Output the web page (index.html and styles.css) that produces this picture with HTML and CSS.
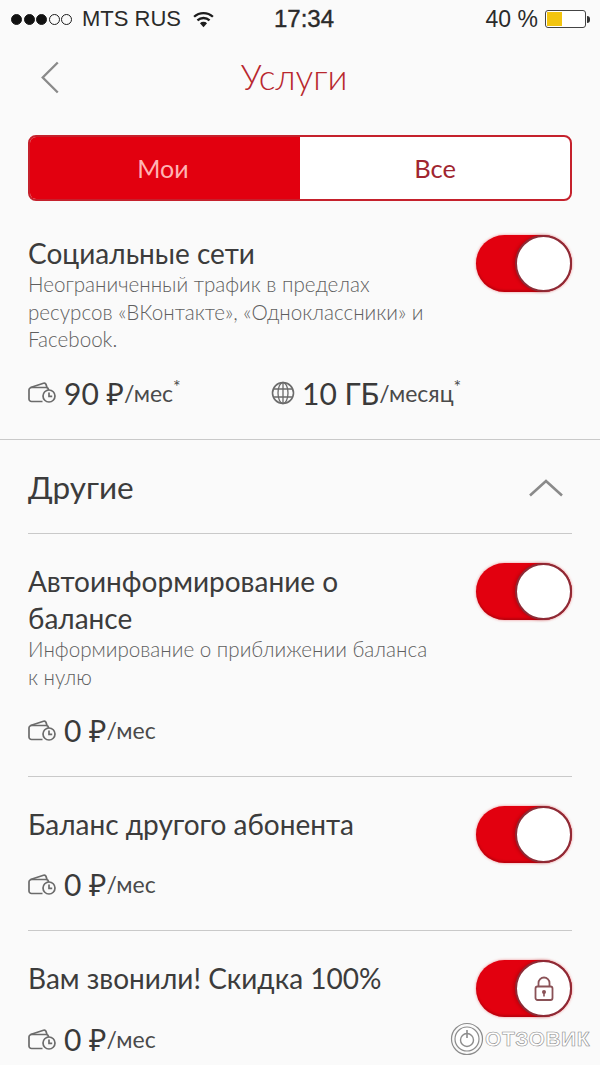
FILE: index.html
```html
<!DOCTYPE html>
<html lang="ru">
<head>
<meta charset="utf-8">
<title>Услуги</title>
<link rel="stylesheet" href="styles.css">
</head>
<body>
<div class="screen">
  <div class="status">
    <div class="status-left">
      <span class="signal"><i class="dot on"></i><i class="dot on"></i><i class="dot on"></i><i class="dot"></i><i class="dot"></i></span>
      <span class="carrier">MTS RUS</span>
      <svg class="wifi" width="23" height="17" viewBox="0 0 22 16"><path d="M11 15.5 L7.6 11.6 A5 5 0 0 1 14.4 11.6 Z" fill="#1c1c1c"/><path d="M5.2 8.8 A8.6 8.6 0 0 1 16.8 8.8" fill="none" stroke="#1c1c1c" stroke-width="2.2"/><path d="M2 5.4 A13.2 13.2 0 0 1 20 5.4" fill="none" stroke="#1c1c1c" stroke-width="2.2"/></svg>
    </div>
    <div class="clock">17:34</div>
    <div class="status-right">
      <span class="charge">40 %</span>
      <span class="battery"><span class="battery-fill"></span></span>
      <span class="battery-tip"></span>
    </div>
  </div>

  <div class="nav">
    <svg class="back" width="20" height="33" viewBox="0 0 20 34"><path d="M18 1.5 L2.5 17 L18 32.5" fill="none" stroke="#8a8a8a" stroke-width="2.4"/></svg>
    <h1 class="title">Услуги</h1>
  </div>

  <div class="tabs">
    <div class="tab tab-active">Мои</div>
    <div class="tab">Все</div>
  </div>

  <section class="service service-first">
    <div class="service-top">
      <div class="service-text">
        <div class="service-name">Социальные сети</div>
        <p class="service-desc">Неограниченный трафик в пределах ресурсов «ВКонтакте», «Одноклассники» и Facebook.</p>
      </div>
      <div class="toggle"><span class="knob"></span></div>
    </div>
    <div class="prices">
      <div class="price">
        <svg class="icon" width="29" height="21" viewBox="0 0 29 21"><use href="#wallet"/></svg>
        <span class="amount">90 ₽</span><span class="unit">/мес<sup>*</sup></span>
      </div>
      <div class="price">
        <svg class="icon" width="24" height="24" viewBox="0 0 24 24"><circle cx="12" cy="12" r="10.5" fill="none" stroke="#6b6b6b" stroke-width="1.6"/><ellipse cx="12" cy="12" rx="5" ry="10.5" fill="none" stroke="#6b6b6b" stroke-width="1.3"/><path d="M12 1.5V22.5M2 8H22M2 16H22" fill="none" stroke="#6b6b6b" stroke-width="1.3"/></svg>
        <span class="amount">10 ГБ</span><span class="unit">/месяц<sup>*</sup></span>
      </div>
    </div>
  </section>

  <div class="group-head">
    <span class="group-name">Другие</span>
    <svg class="chevron" width="36" height="20" viewBox="0 0 36 20"><path d="M2 17.5 L18 3 L34 17.5" fill="none" stroke="#8a8a8a" stroke-width="2.6"/></svg>
  </div>

  <section class="service service-two">
    <div class="service-top">
      <div class="service-text">
        <div class="service-name">Автоинформирование о балансе</div>
        <p class="service-desc">Информирование о приближении баланса к нулю</p>
      </div>
      <div class="toggle"><span class="knob"></span></div>
    </div>
    <div class="prices">
      <div class="price">
        <svg class="icon" width="29" height="21" viewBox="0 0 29 21"><use href="#wallet"/></svg>
        <span class="amount">0 ₽</span><span class="unit">/мес</span>
      </div>
    </div>
  </section>

  <section class="service service-three">
    <div class="service-top">
      <div class="service-text">
        <div class="service-name">Баланс другого абонента</div>
      </div>
      <div class="toggle"><span class="knob"></span></div>
    </div>
    <div class="prices">
      <div class="price">
        <svg class="icon" width="29" height="21" viewBox="0 0 29 21"><use href="#wallet"/></svg>
        <span class="amount">0 ₽</span><span class="unit">/мес</span>
      </div>
    </div>
  </section>

  <section class="service service-four">
    <div class="service-top">
      <div class="service-text">
        <div class="service-name">Вам звонили! Скидка 100%</div>
      </div>
      <div class="toggle">
        <span class="knob">
          <svg width="20" height="26" viewBox="0 0 20 26"><path d="M4.5 11V7a5.5 5.5 0 0 1 11 0v4" fill="none" stroke="#8a5257" stroke-width="1.8"/><rect x="1.5" y="10.5" width="17" height="13.5" rx="2" fill="none" stroke="#8a5257" stroke-width="1.8"/><circle cx="10" cy="16" r="2" fill="#8a5257"/><path d="M10 17v3.5" stroke="#8a5257" stroke-width="1.6"/></svg>
        </span>
      </div>
    </div>
    <div class="prices">
      <div class="price">
        <svg class="icon" width="29" height="21" viewBox="0 0 29 21"><use href="#wallet"/></svg>
        <span class="amount">0 ₽</span><span class="unit">/мес</span>
      </div>
    </div>
  </section>

  <div class="watermark">
    <svg width="34" height="34" viewBox="0 0 34 34"><circle cx="17" cy="17" r="15.5" fill="none" stroke="#8c8c8c" stroke-width="1.2"/><circle cx="17" cy="17" r="12" fill="#fff" stroke="#8c8c8c" stroke-width="1.2"/><circle cx="17" cy="18" r="6.5" fill="none" stroke="#8c8c8c" stroke-width="1.4"/><path d="M17 8v8" stroke="#8c8c8c" stroke-width="1.6"/></svg>
    <span class="watermark-text">ОТЗОВИК</span>
  </div>

  <svg class="defs" width="0" height="0">
    <defs>
      <g id="wallet" fill="none" stroke="#6b6b6b" stroke-width="1.7">
        <path d="M14.5 19.5H3.5A2.5 2.5 0 0 1 1 17V8A2.5 2.5 0 0 1 3.5 5.5H18A2.5 2.5 0 0 1 20.5 8"/>
        <path d="M2.5 5.5 L15.5 1.2 A2 2 0 0 1 18 2.4 L19 5.5"/>
        <circle cx="21" cy="14" r="6"/>
        <path d="M21 10.5V14.3H24.2"/>
      </g>
    </defs>
  </svg>
</div>
</body>
</html>
```

FILE: styles.css
```css
* { box-sizing: border-box; }
html, body { margin: 0; padding: 0; }
body { background: #fafafa; font-family: Lato, "Open Sans", "Noto Sans", sans-serif; color: #3a3a3a; }
.screen { position: relative; width: 600px; height: 1065px; overflow: hidden; background: #fafafa; }

.status { display: grid; grid-template-columns: 263px auto 1fr; align-items: center; height: 38px; padding: 0 10px 0 11px; font-family: "Liberation Sans", Arial, sans-serif; color: #2a2a2a; }
.status-left { display: flex; align-items: center; font-size: 22px; }
.signal { display: flex; gap: 1.5px; margin-right: 10px; }
.dot { width: 11px; height: 11px; border-radius: 50%; border: 1px solid #1c1c1c; }
.dot.on { background: #111; }
.carrier { margin-right: 11px; }
.clock { font-size: 24px; white-space: nowrap; -webkit-text-stroke: .4px #2a2a2a; }
.status-right { display: flex; align-items: center; justify-content: flex-end; font-size: 23px; }
.charge { margin-right: 7px; }
.battery { display: block; width: 41px; height: 18px; padding: 1px; border: 1px solid #444; border-radius: 3px; background: #fff; }
.battery-fill { display: block; width: 40%; height: 100%; background: #f2c40f; }
.battery-tip { width: 3px; height: 7px; margin-left: 1px; border-radius: 0 3px 3px 0; background: #333; }

.nav { display: grid; grid-template-columns: 1fr auto 1fr; align-items: center; height: 80px; padding: 0 52px 0 40px; }
.back { margin-bottom: 1px; }
.title { margin: 0 0 4px; font-size: 35.3px; font-weight: 300; color: #b8272e; }

.tabs { display: grid; grid-template-columns: 1fr 1fr; height: 66px; margin: 17px 28px 0; overflow: hidden; border: 2px solid #c5212c; border-radius: 8px; background: #fff; }
.tab { display: flex; align-items: center; justify-content: center; padding-bottom: 1px; font-size: 25.5px; color: #a0252f; }
.tab-active { padding-right: 4px; background: #e2000f; color: #ffb3b3; font-size: 25px; }

.service { display: block; margin: 0 28px; }
.service-first { height: 239px; margin: 0; padding: 34px 28px 0; border-bottom: 1px solid #c9c9c9; }
.service-two { height: 243px; padding-top: 29px; border-bottom: 1px solid #c9c9c9; }
.service-three { height: 154px; padding-top: 29px; border-bottom: 1px solid #c9c9c9; }
.service-four { padding-top: 29px; }

.service-top { display: flex; align-items: flex-start; justify-content: space-between; }
.service-text { width: 412px; }
.service-name { font-size: 28px; line-height: 37px; color: #3c3c3c; }
.service-desc { margin: -1px 0 0; font-size: 20.6px; line-height: 27.6px; font-weight: 300; color: #5f5f5f; }
.toggle { display: flex; flex: none; justify-content: flex-end; width: 96px; height: 57px; border-radius: 29px; background: #e2000f; box-shadow: 0 0 3px rgba(226, 0, 15, .45), inset 0 -2px 2px rgba(120, 0, 10, .35); }
.knob { display: flex; align-items: center; justify-content: center; width: 57px; height: 57px; border: 2px solid #8d2b36; border-radius: 50%; background: #fff; box-shadow: -2px 0 3px rgba(120, 0, 10, .3); }

.prices { display: flex; align-items: center; margin-top: 21px; }
.price { display: flex; align-items: center; width: 243px; white-space: nowrap; }
.icon { flex: none; margin-right: 7px; }
.amount { font-size: 30px; line-height: 36px; color: #3a3a3a; }
.unit { font-size: 23px; color: #4a4a4a; }
.unit sup { font-size: 18px; line-height: 0; }

.group-head { display: flex; align-items: center; justify-content: space-between; height: 94px; margin: 0 28px; padding-right: 8px; border-bottom: 1px solid #c9c9c9; }
.group-name { font-size: 31.5px; color: #3c3c3c; }
.chevron { margin-top: 2px; }

.service-three .prices { margin-top: 3px; }
.service-four .prices { margin-top: 4px; }

.watermark { position: absolute; right: 10px; bottom: 9px; display: flex; align-items: center; gap: 1px; }
.watermark-text { font-family: "Liberation Sans", Arial, sans-serif; font-size: 21px; font-weight: 700; letter-spacing: .5px; color: #fff; -webkit-text-stroke: .6px #8c8c8c; }
.defs { position: absolute; }
```
